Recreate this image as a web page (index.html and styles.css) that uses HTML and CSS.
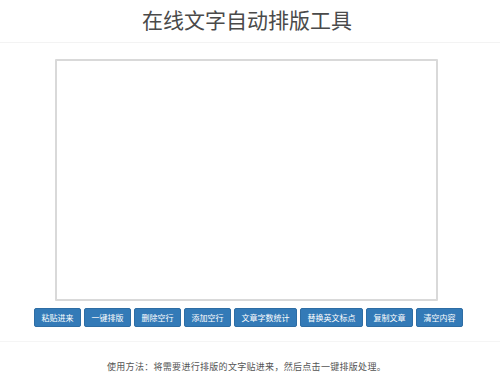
FILE: index.html
```html
<!DOCTYPE html>
<html lang="zh-CN">
<head>
<meta charset="utf-8">
<title>在线文字自动排版工具</title>
<link rel="stylesheet" href="styles.css">
</head>
<body>
<header class="header">
  <h1 class="title">在线文字自动排版工具</h1>
</header>
<main class="main">
  <textarea class="editor"></textarea>
  <div class="toolbar">
    <button class="btn">粘贴进来</button>
    <button class="btn">一键排版</button>
    <button class="btn">删除空行</button>
    <button class="btn">添加空行</button>
    <button class="btn">文章字数统计</button>
    <button class="btn">替换英文标点</button>
    <button class="btn">复制文章</button>
    <button class="btn">清空内容</button>
  </div>
</main>
<footer class="footer">
  <p class="usage">使用方法：将需要进行排版的文字贴进来，然后点击一键排版处理。</p>
</footer>
</body>
</html>
```

FILE: styles.css
```css
html, body {
  margin: 0;
  padding: 0;
  background: #fff;
  font-family: "Noto Sans CJK SC", "Noto Sans", sans-serif;
}
.header {
  height: 42px;
  border-bottom: 1px solid #f3f3f3;
  display: flex;
  justify-content: center;
  align-items: center;
}
.title {
  margin: 0;
  font-size: 21px;
  font-weight: 400;
  color: #4a4a4a;
  line-height: 1;
  margin-top: -3px;
  margin-left: -6px;
}
.main {
  display: flex;
  flex-direction: column;
  align-items: center;
  padding-top: 16px;
  padding-bottom: 14px;
  border-bottom: 1px solid #f5f5f5;
}
.editor {
  box-sizing: border-box;
  width: 383px;
  height: 242px;
  margin-left: -7px;
  border: 2px solid #d9d9d9;
  border-radius: 1px;
  resize: none;
  outline: none;
  background: #fff;
}
.toolbar {
  display: flex;
  gap: 3px;
  margin-top: 7px;
  margin-left: -3px;
}
.btn {
  height: 19px;
  padding: 0 6.5px;
  border: 1px solid #2e6da4;
  border-radius: 2px;
  background: #337ab7;
  color: #fff;
  font-family: "Noto Sans CJK SC", sans-serif;
  font-size: 8px;
  line-height: 17px;
  cursor: pointer;
}
.footer {
  display: flex;
  justify-content: center;
  padding-top: 18px;
}
.usage {
  margin: 0;
  margin-left: -7px;
  font-size: 9px;
  letter-spacing: 0.3px;
  color: #555;
}
```
